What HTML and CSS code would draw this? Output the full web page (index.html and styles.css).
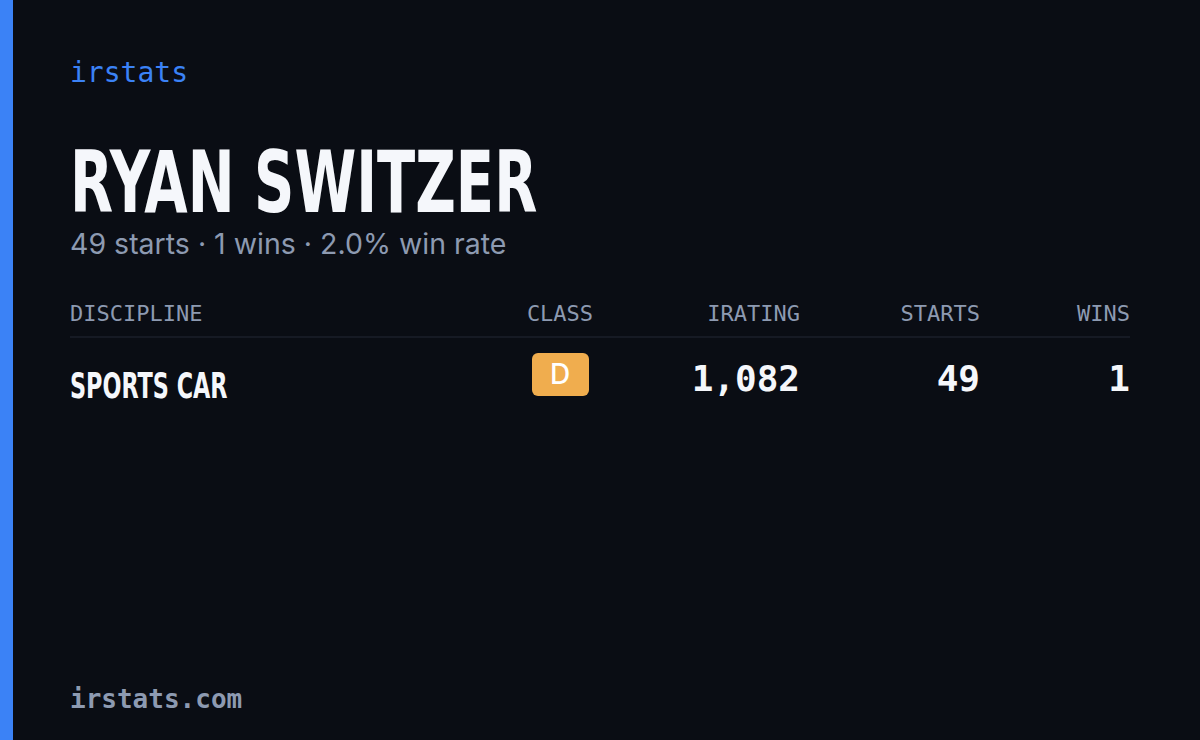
FILE: index.html
```html
<!DOCTYPE html>
<html>
<head>
<meta charset="utf-8">
<link rel="stylesheet" href="styles.css">
</head>
<body>
<div class="card">
  <div class="accent"></div>
  <main class="content">
    <div class="logo">irstats</div>
    <h1 class="name"><span class="squeeze">RYAN SWITZER</span></h1>
    <div class="summary">49 starts · 1 wins · 2.0% win rate</div>
    <div class="table">
      <div class="row head">
        <div class="c-disc">DISCIPLINE</div>
        <div class="c-class">CLASS</div>
        <div class="c-num">IRATING</div>
        <div class="c-num">STARTS</div>
        <div class="c-num">WINS</div>
      </div>
      <div class="row body">
        <div class="c-disc disc"><span class="squeeze-sm">SPORTS CAR</span></div>
        <div class="c-class"><span class="badge">D</span></div>
        <div class="c-num num">1,082</div>
        <div class="c-num num">49</div>
        <div class="c-num num">1</div>
      </div>
    </div>
    <div class="footer">irstats.com</div>
  </main>
</div>
</body>
</html>
```

FILE: styles.css
```css
html, body {
  margin: 0;
  padding: 0;
  background: #0a0d14;
}
.card {
  width: 1200px;
  height: 740px;
  display: flex;
  background: #0a0d14;
  overflow: hidden;
}
.accent {
  width: 13px;
  flex: none;
  background: #3b82f6;
}
.content {
  flex: 1;
  display: flex;
  flex-direction: column;
  padding: 0 70px 0 57px;
}
.logo {
  font-family: "DejaVu Sans Mono", monospace;
  font-size: 28px;
  color: #3b82f6;
  margin-top: 55px;
  line-height: 36px;
}
.name {
  margin: 54px 0 0 0;
  font-family: "DejaVu Sans", sans-serif;
  font-stretch: condensed;
  font-weight: 700;
  font-size: 86px;
  line-height: 68px;
  color: #f5f7fb;
  white-space: nowrap;
}
.squeeze {
  display: inline-block;
  transform: scaleX(0.724);
  transform-origin: left center;
  margin-top: 3px;
}
.summary {
  font-family: Inter, "Noto Sans", sans-serif;
  font-size: 28.5px;
  color: #8d9ab1;
  line-height: 40px;
  margin-top: 8px;
}
.table {
  margin-top: 33px;
}
.row {
  display: grid;
  grid-template-columns: 440px 100px 190px 180px 150px;
}
.head {
  font-family: "DejaVu Sans Mono", monospace;
  font-size: 22px;
  line-height: 30px;
  color: #8d9ab1;
  height: 37px;
  padding-top: 2px;
  align-items: start;
  border-bottom: 2px solid #161a24;
}
.c-class {
  text-align: center;
}
.c-num {
  text-align: right;
}
.body {
  height: 80px;
  align-items: center;
}
.disc {
  font-family: "DejaVu Sans", sans-serif;
  font-stretch: condensed;
  font-weight: 700;
  font-size: 36px;
  color: #f5f7fb;
  padding-top: 14px;
  white-space: nowrap;
}
.squeeze-sm {
  display: inline-block;
  transform: scaleX(0.69);
  transform-origin: left center;
}
.badge {
  display: inline-block;
  width: 57px;
  height: 43px;
  line-height: 43px;
  border-radius: 6px;
  background: #f0ad4e;
  color: #fff;
  font-family: Inter, sans-serif;
  font-size: 28px;
  font-weight: 500;
  margin-top: -8px;
}
.num {
  font-family: "DejaVu Sans Mono", monospace;
  font-size: 36px;
  font-weight: 700;
  color: #f5f7fb;
}
.footer {
  margin-top: auto;
  margin-bottom: 26px;
  font-family: "DejaVu Sans Mono", monospace;
  font-size: 26px;
  font-weight: 700;
  color: #8d9ab1;
}
```
